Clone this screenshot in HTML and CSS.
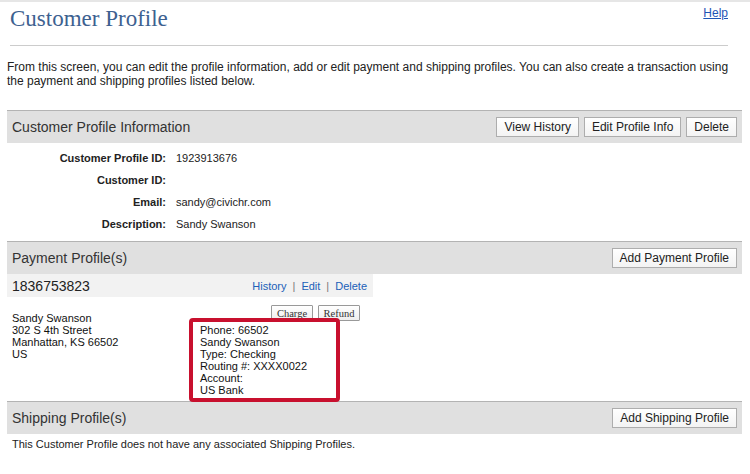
FILE: index.html
```html
<!DOCTYPE html>
<html>
<head>
<meta charset="utf-8">
<title>Customer Profile</title>
<link rel="stylesheet" href="styles.css">
</head>
<body>
<div class="page">
  <header class="page-header">
    <h1 class="page-title">Customer Profile</h1>
    <a class="help-link" href="#">Help</a>
  </header>
  <hr class="rule">
  <p class="intro">From this screen, you can edit the profile information, add or edit payment and shipping profiles. You can also create a transaction using the payment and shipping profiles listed below.</p>

  <section class="section">
    <div class="section-bar">
      <h2 class="section-title">Customer Profile Information</h2>
      <div class="bar-actions">
        <button class="btn">View History</button>
        <button class="btn">Edit Profile Info</button>
        <button class="btn">Delete</button>
      </div>
    </div>
    <dl class="details">
      <div class="detail-row"><dt>Customer Profile ID:</dt><dd>1923913676</dd></div>
      <div class="detail-row"><dt>Customer ID:</dt><dd></dd></div>
      <div class="detail-row"><dt>Email:</dt><dd>sandy@civichr.com</dd></div>
      <div class="detail-row"><dt>Description:</dt><dd>Sandy Swanson</dd></div>
    </dl>
  </section>

  <section class="section">
    <div class="section-bar">
      <h2 class="section-title">Payment Profile(s)</h2>
      <div class="bar-actions">
        <button class="btn">Add Payment Profile</button>
      </div>
    </div>
    <div class="profile-card">
      <div class="profile-head">
        <span class="profile-id">1836753823</span>
        <span class="profile-links"><a href="#">History</a><span class="sep">|</span><a href="#">Edit</a><span class="sep">|</span><a href="#">Delete</a></span>
      </div>
      <div class="profile-body">
        <div class="address">
          <div>Sandy Swanson</div>
          <div>302 S 4th Street</div>
          <div>Manhattan, KS 66502</div>
          <div>US</div>
        </div>
        <div class="pay-col">
          <div class="small-actions">
            <button class="sbtn">Charge</button>
            <button class="sbtn">Refund</button>
          </div>
          <div class="bank-box">
            <div>Phone: 66502</div>
            <div>Sandy Swanson</div>
            <div>Type: Checking</div>
            <div>Routing #: XXXX0022</div>
            <div>Account:</div>
            <div>US Bank</div>
          </div>
        </div>
      </div>
    </div>
  </section>

  <section class="section">
    <div class="section-bar">
      <h2 class="section-title">Shipping Profile(s)</h2>
      <div class="bar-actions">
        <button class="btn">Add Shipping Profile</button>
      </div>
    </div>
    <p class="empty-note">This Customer Profile does not have any associated Shipping Profiles.</p>
  </section>
</div>
</body>
</html>
```

FILE: styles.css
```css
html, body {
  margin: 0;
  padding: 0;
  background: #ffffff;
}
body {
  font-family: "Liberation Sans", Arial, sans-serif;
  color: #222222;
  border-top: 2px solid #e6e6e6;
}
.page {
  width: 735px;
  margin-left: 7px;
}
.page-header {
  height: 43px;
  display: flex;
  justify-content: space-between;
  align-items: flex-start;
  padding: 0 14px 0 3px;
}
.page-title {
  margin: 0;
  padding-top: 3px;
  font-family: "Liberation Serif", Georgia, serif;
  font-weight: normal;
  font-size: 23px;
  line-height: 28px;
  color: #3d6190;
}
.help-link {
  margin-top: 4px;
  font-size: 12px;
  line-height: 14px;
  color: #1f55b5;
  text-decoration: underline;
}
.rule {
  margin: 0 14px 0 3px;
  border: 0;
  border-top: 1px solid #cccccc;
  height: 0;
}
.intro {
  margin: 14px 0 0 0;
  font-size: 12px;
  line-height: 14px;
  color: #222222;
}
.intro + .section {
  margin-top: 22px;
}
.section-bar {
  display: flex;
  justify-content: space-between;
  align-items: center;
  height: 32px;
  border-top: 1px solid #b3b3b3;
  background: #e0e0e0;
  padding: 0 5px 0 5px;
}
.section-title {
  margin: 0;
  font-size: 14px;
  font-weight: normal;
  color: #333333;
}
.bar-actions {
  display: flex;
  gap: 5px;
}
.btn {
  height: 20px;
  padding: 0 7px;
  font-family: "Liberation Sans", Arial, sans-serif;
  font-size: 12px;
  color: #222222;
  background: linear-gradient(#ffffff, #f3f3f3);
  border: 1px solid #adadad;
  border-radius: 0;
}
.details {
  margin: 0;
  padding: 4px 0 6px 0;
}
.detail-row {
  display: flex;
  height: 22px;
  align-items: center;
  font-size: 11px;
}
.detail-row dt {
  width: 159px;
  text-align: right;
  font-weight: bold;
  color: #222222;
}
.detail-row dd {
  margin: 0 0 0 10px;
  color: #222222;
}
.profile-card {
  width: 366px;
}
.profile-head {
  display: flex;
  justify-content: space-between;
  align-items: center;
  height: 23px;
  background: #f2f2f2;
  padding: 0 6px 0 5px;
}
.profile-id {
  font-size: 14px;
  color: #222222;
}
.profile-links {
  font-size: 11px;
  color: #777777;
}
.profile-links a {
  color: #2060b8;
  text-decoration: none;
}
.profile-links .sep {
  margin: 0 6px;
}
.profile-body {
  display: flex;
  padding-left: 5px;
}
.address {
  width: 177px;
  padding-top: 15px;
  font-size: 11px;
  line-height: 12px;
  color: #111111;
}
.pay-col {
  flex: 1;
  display: flex;
  flex-direction: column;
  align-items: flex-start;
}
.small-actions {
  align-self: flex-end;
  display: flex;
  gap: 5px;
  margin-top: 8px;
  margin-right: 13px;
}
.sbtn {
  width: 42px;
  height: 16px;
  padding: 0;
  font-family: "Liberation Serif", "Times New Roman", serif;
  font-size: 10.5px;
  color: #333333;
  background: linear-gradient(#ffffff, #eeeeee);
  border: 1px solid #999999;
  border-radius: 1px;
}
.bank-box {
  width: 151px;
  box-sizing: border-box;
  margin-top: -3px;
  margin-bottom: -1px;
  padding: 2px 6px 2px 7px;
  border: 4px solid #c8102e;
  border-radius: 4px;
  font-size: 11px;
  line-height: 12px;
  color: #111111;
  background: #ffffff;
  position: relative;
}
.empty-note {
  margin: 4px 0 0 5px;
  font-size: 11px;
  line-height: 12px;
  color: #222222;
}
```
